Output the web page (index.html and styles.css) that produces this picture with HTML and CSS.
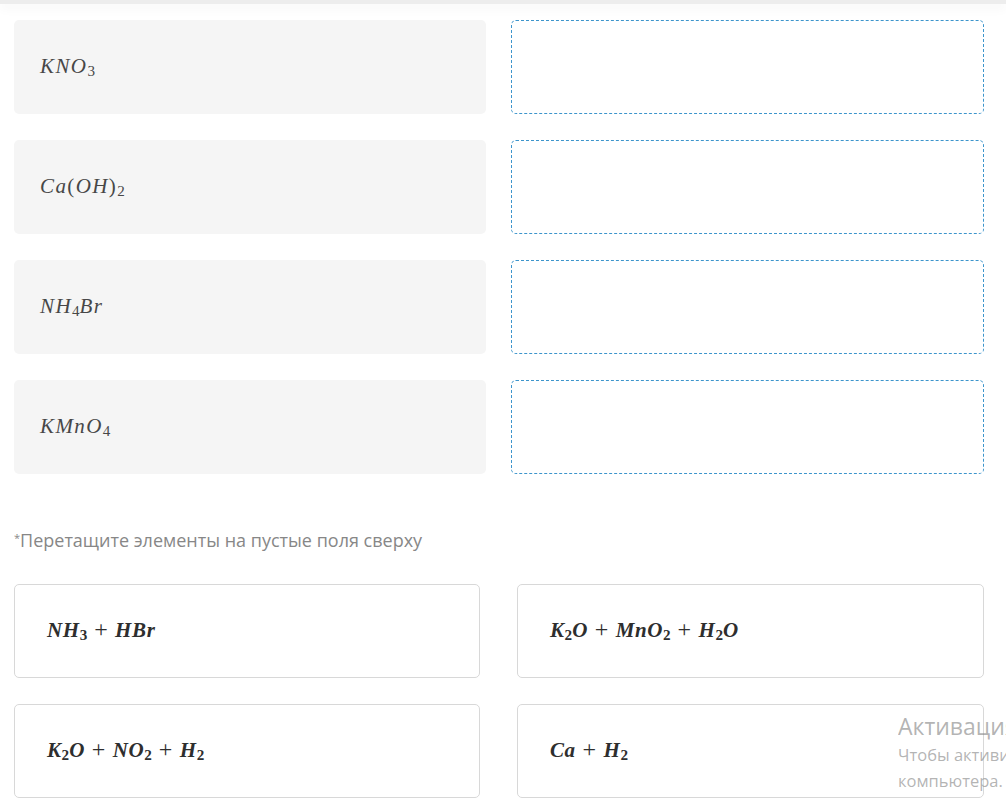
FILE: index.html
```html
<!DOCTYPE html>
<html lang="ru">
<head>
    <meta charset="UTF-8">
    <meta name="viewport" content="width=device-width, initial-scale=1.0">
    <title>Соотнесите вещества</title>
    <link rel="stylesheet" href="styles.css">
</head>
<body>
    <div class="topbar"></div>
    <div class="task">
        <div class="pairs">
            <div class="term"><span class="math">KNO<sub>3</sub></span></div>
            <div class="slot"></div>
            <div class="term"><span class="math">Ca<span class="up">(</span>OH<span class="up">)</span><sub>2</sub></span></div>
            <div class="slot"></div>
            <div class="term"><span class="math">NH<sub>4</sub>Br</span></div>
            <div class="slot"></div>
            <div class="term"><span class="math">KMnO<sub>4</sub></span></div>
            <div class="slot"></div>
        </div>

        <p class="hint"><span class="star">*</span>Перетащите элементы на пустые поля сверху</p>

        <div class="answers">
            <div class="answer"><span class="math">NH<sub>3</sub> <span class="op">+</span> HBr</span></div>
            <div class="answer"><span class="math">K<sub>2</sub>O <span class="op">+</span> MnO<sub>2</sub> <span class="op">+</span> H<sub>2</sub>O</span></div>
            <div class="answer"><span class="math">K<sub>2</sub>O <span class="op">+</span> NO<sub>2</sub> <span class="op">+</span> H<sub>2</sub></span></div>
            <div class="answer"><span class="math">Ca <span class="op">+</span> H<sub>2</sub></span></div>
        </div>
    </div>

    <div class="activation">
        <div class="activation-title">Активация Windows</div>
        <div class="activation-text">Чтобы активировать Windows, перейдите в раздел "Параметры"<br>компьютера.</div>
    </div>
</body>
</html>
```

FILE: styles.css
```css
body {
    margin: 0;
    background-color: #fff;
    font-family: "Open Sans", sans-serif;
    overflow: hidden;
}

.topbar {
    height: 4px;
    background-color: #ededed;
    box-shadow: 0 3px 12px rgba(0, 0, 0, 0.07);
}

.task {
    padding: 16px 22px 0 14px;
}

.pairs {
    display: grid;
    grid-template-columns: 472px 473px;
    column-gap: 25px;
    row-gap: 26px;
}

.term,
.slot {
    height: 94px;
    box-sizing: border-box;
    border-radius: 5px;
}

.term {
    background-color: #f5f5f5;
    display: flex;
    align-items: center;
    padding-left: 26px;
    color: #474747;
}

.slot {
    border: 1px dashed #3d95cc;
}

/* формулы в стиле математического курсива */
.math {
    font-family: "Liberation Serif", serif;
    font-style: italic;
    font-size: 21px;
    letter-spacing: 1.4px;
}

.math sub {
    font-style: normal;
    font-size: 0.72em;
    vertical-align: -0.2em;
    letter-spacing: 0;
}

.math .up {
    font-style: normal;
}

.math .op {
    font-style: normal;
    font-weight: normal;
    font-size: 24px;
    line-height: 1;
    margin: 0 1px;
}

.hint {
    margin: 52px 0 0;
    color: #878787;
    font-size: 18px;
    line-height: 24px;
}

.star {
    font-size: 11px;
    vertical-align: 5px;
}

.answers {
    display: grid;
    grid-template-columns: 466px 467px;
    column-gap: 37px;
    row-gap: 26px;
    margin-top: 32px;
}

.answer {
    height: 94px;
    box-sizing: border-box;
    border: 1px solid #d8d8d8;
    border-radius: 5px;
    display: flex;
    align-items: center;
    padding-left: 32px;
    color: #2e2e2e;
}

.answer .math {
    font-weight: bold;
    letter-spacing: 0.6px;
}

/* водяной знак системы уходит за правый край окна */
.activation {
    position: absolute;
    left: 898px;
    top: 710px;
    right: 0;
    overflow: hidden;
    white-space: nowrap;
    color: rgba(130, 130, 130, 0.6);
    pointer-events: none;
}

.activation-title {
    font-size: 23px;
    line-height: 32px;
}

.activation-text {
    font-size: 16.5px;
    line-height: 26px;
}
```
